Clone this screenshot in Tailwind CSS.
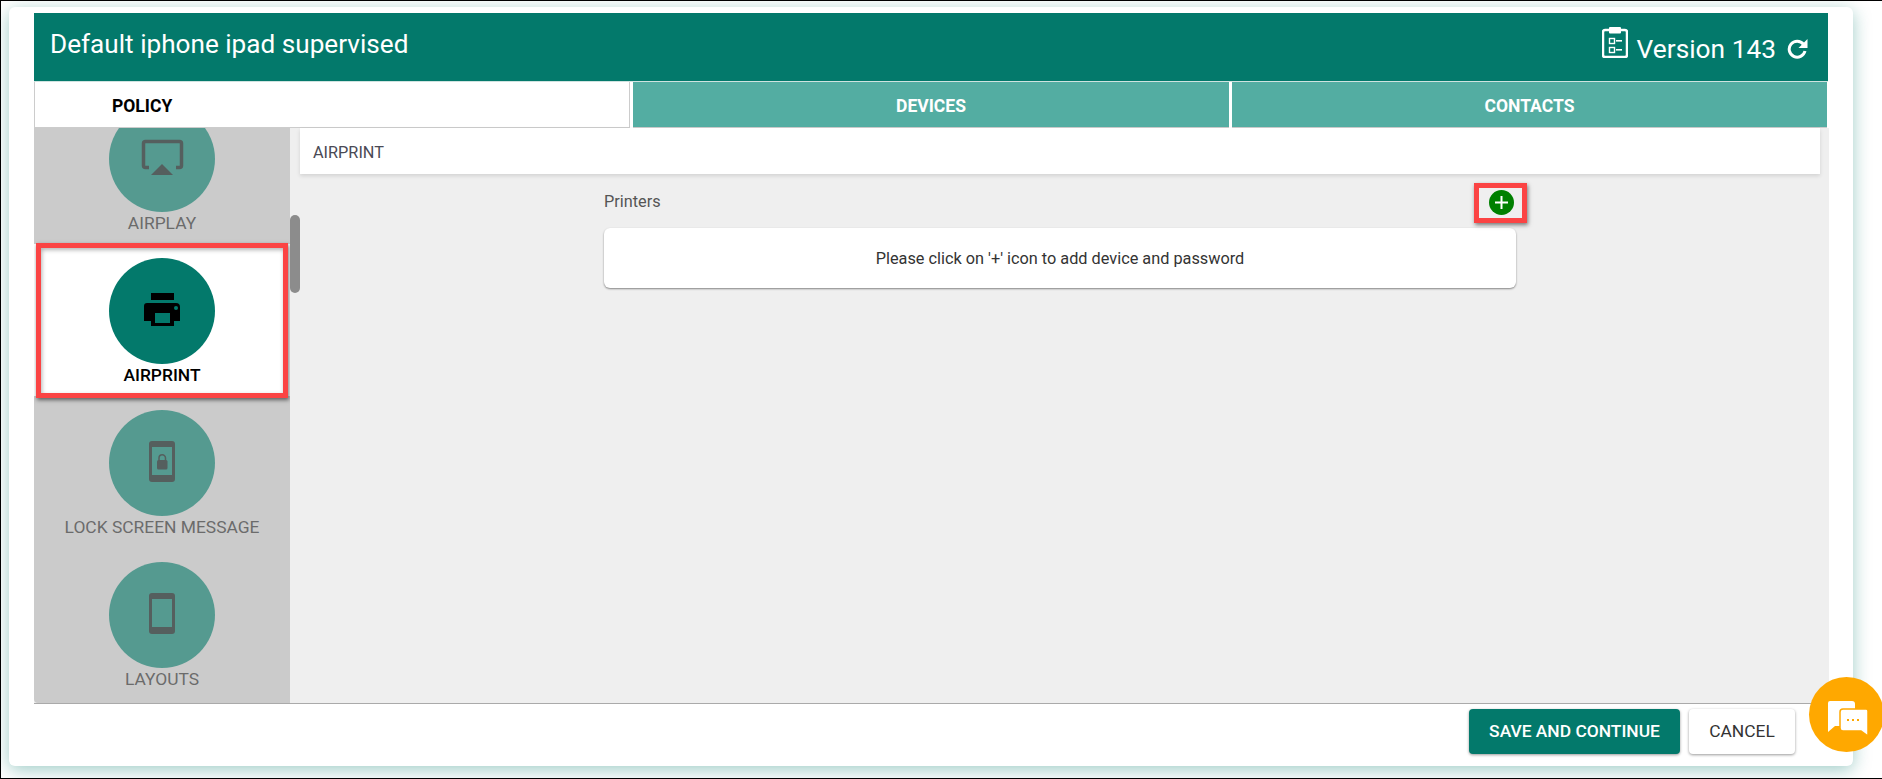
<!DOCTYPE html>
<html lang="en">
<head>
  <meta charset="UTF-8" />
  <title>Default iphone ipad supervised</title>
  <script src="https://cdn.jsdelivr.net/npm/@tailwindcss/browser@4"></script>
</head>
<body class="relative h-[779px] w-[1882px] overflow-hidden border-y border-l border-black bg-white font-[Roboto,sans-serif]">
  <!-- Card -->
  <div class="ml-[8px] mr-[29px] mt-[6px] flex h-[759px] flex-col rounded-md bg-white pl-[25px] pr-[25px] pt-[6px] shadow-[0_4px_18px_rgba(0,121,107,0.38)]">
    <!-- Header -->
    <header class="flex h-[68px] items-center justify-between bg-[#03796b] pl-[16px] pr-[20px] text-white">
      <h1 class="-mt-[6px] text-[26.150px] leading-none">Default iphone ipad supervised</h1>
      <div class="mt-[4px] flex items-center">
        <svg class="-mt-[12px] mr-[9px]" width="26" height="31" viewBox="0 0 26 31">
          <rect x="1" y="3" width="24" height="27" rx="2" fill="none" stroke="#fff" stroke-width="2.500"/>
          <rect x="7" y="0" width="12" height="6.500" rx="1" fill="#fff"/>
          <rect x="7.500" y="11.500" width="5" height="5" fill="none" stroke="#fff" stroke-width="1.400"/>
          <rect x="14" y="13" width="6" height="1.600" fill="#fff"/>
          <rect x="7.500" y="20.500" width="5" height="5" fill="none" stroke="#fff" stroke-width="1.400"/>
          <rect x="14" y="22" width="6" height="1.600" fill="#fff"/>
        </svg>
        <span class="text-[26.300px] leading-none">Version 143</span>
        <svg class="ml-[11px]" width="21" height="20" viewBox="0 0 21 20">
          <path d="M16.500 5.200A8 8 0 1 0 18 12" fill="none" stroke="#fff" stroke-width="3"/>
          <path d="M20.500 0v9h-9z" fill="#fff"/>
        </svg>
      </div>
    </header>

    <!-- Tabs -->
    <nav class="flex h-[47px] gap-[3px] border-t border-[#cfe3e0] pr-px text-[17.500px] font-bold">
      <div class="flex w-[596px] items-center border-x border-b border-[#cccccc] bg-white pl-[77px] pt-[3px] text-black">POLICY</div>
      <div class="flex w-[596px] items-center justify-center border-b border-[#cccccc] bg-[#53ada2] pt-[3px] text-white">DEVICES</div>
      <div class="flex flex-1 items-center justify-center border-b border-[#cccccc] bg-[#53ada2] pt-[3px] text-white">CONTACTS</div>
    </nav>

    <!-- Body -->
    <div class="-mr-px flex h-[576px] border-b border-[#aaaaaa] bg-[#efefef]">
      <!-- Sidebar list, scrolled part way down -->
      <aside class="w-[256px] shrink-0 overflow-hidden rounded-bl bg-[#cbcbcb] text-center text-[17.400px] leading-[22px] text-[#6b6b6b]">
        <div class="-mt-[36px]">
          <div class="h-[152px] pt-[14px]">
            <div class="mx-auto h-[106px] w-[106px] rounded-full bg-[#559a90]">
              <svg width="106" height="106" viewBox="0 0 106 106">
                <path d="M40 61.500h-3.500a2 2 0 0 1-2-2v-22a2 2 0 0 1 2-2h34a2 2 0 0 1 2 2v22a2 2 0 0 1-2 2H67" fill="none" stroke="#555f5e" stroke-width="3.500"/>
                <path d="M53 58l11 11H42z" fill="#555f5e"/>
              </svg>
            </div>
            <div>AIRPLAY</div>
          </div>
          <!-- Active item, red box is the screenshot's annotation -->
          <div class="relative z-10 h-[152px] bg-white pt-[14px] font-medium text-black">
            <div class="mx-auto h-[106px] w-[106px] rounded-full bg-[#03796b]">
              <svg width="106" height="106" viewBox="0 0 106 106">
                <rect x="42" y="35" width="23" height="7"/>
                <path d="M38 45h29a4 4 0 0 1 4 4v14h-6v5H42v-5h-7V48a3 3 0 0 1 3-3z"/>
                <rect x="46" y="55" width="15" height="10" fill="#03796b"/>
                <circle cx="67" cy="50" r="2" fill="#03796b"/>
              </svg>
            </div>
            <div>AIRPRINT</div>
            <div class="absolute -bottom-[2px] -top-[1px] left-[2px] right-[2px] border-[5px] border-[#fb4444] shadow-[1px_2px_4px_rgba(0,0,0,0.55),inset_1px_2px_4px_rgba(0,0,0,0.3)]"></div>
          </div>
          <div class="h-[152px] pt-[14px]">
            <div class="mx-auto h-[106px] w-[106px] rounded-full bg-[#559a90]">
              <svg width="106" height="106" viewBox="0 0 106 106">
                <path fill-rule="evenodd" d="M43 31h20a3 3 0 0 1 3 3v35a3 3 0 0 1-3 3H43a3 3 0 0 1-3-3V34a3 3 0 0 1 3-3zm0 6v28h20V37z" fill="#555f5e"/>
                <rect x="48" y="50" width="10.500" height="9.500" rx="1.500" fill="#555f5e"/>
                <path d="M50 51v-3a3.200 3.200 0 0 1 6.500 0v3" fill="none" stroke="#555f5e" stroke-width="1.500"/>
              </svg>
            </div>
            <div>LOCK SCREEN MESSAGE</div>
          </div>
          <div class="h-[152px] pt-[14px]">
            <div class="mx-auto h-[106px] w-[106px] rounded-full bg-[#559a90]">
              <svg width="106" height="106" viewBox="0 0 106 106">
                <path fill-rule="evenodd" d="M43 31h20a3 3 0 0 1 3 3v35a3 3 0 0 1-3 3H43a3 3 0 0 1-3-3V34a3 3 0 0 1 3-3zm0 6v28h20V37z" fill="#555f5e"/>
              </svg>
            </div>
            <div>LAYOUTS</div>
          </div>
        </div>
      </aside>

      <!-- Scrollbar -->
      <div class="w-[10px] shrink-0 pt-[87px]">
        <div class="h-[78px] rounded-full bg-[#8c8c8c]"></div>
      </div>

      <!-- Content -->
      <main class="flex-1">
        <div class="mr-[9px] flex h-[46px] items-center bg-white pl-[13px] pt-[4px] text-[16.300px] text-[#4a4a55] shadow-[0_2px_4px_rgba(0,0,0,0.12)]">AIRPRINT</div>
        <div class="ml-[304px] w-[912px]">
          <div class="relative flex h-[54px] items-center justify-between pr-[2px] text-[16.300px] text-[#555555]">
            <span class="pt-[3px]">Printers</span>
            <div class="mt-[2px] flex h-[25px] w-[25px] items-center justify-center rounded-full bg-[#008000]">
              <svg width="15" height="15" viewBox="0 0 15 15"><path d="M7.500 1v13M1 7.500h13" stroke="#fff" stroke-width="2"/></svg>
            </div>
            <div class="absolute right-[-11px] top-[9px] h-[40px] w-[53px] border-[5px] border-[#fb4444] shadow-[1px_2px_4px_rgba(0,0,0,0.5)]"></div>
          </div>
          <div class="flex h-[60px] items-center justify-center rounded-md bg-white pt-[2px] text-[16.300px] text-[#333333] shadow-[0_1px_2px_rgba(0,0,0,0.45)]">Please click on '+' icon to add device and password</div>
        </div>
      </main>
    </div>

    <!-- Footer -->
    <footer class="flex justify-end gap-[9px] pr-[33px] pt-[5px] text-[17.400px]">
      <button class="h-[45px] w-[211px] rounded bg-[#03796b] font-medium text-white shadow-[0_1px_3px_rgba(0,0,0,0.4)]">SAVE AND CONTINUE</button>
      <button class="h-[45px] w-[106px] rounded bg-white text-[#333333] shadow-[0_1px_3px_rgba(0,0,0,0.4)]">CANCEL</button>
    </footer>
  </div>

  <!-- Chat bubble -->
  <div class="absolute left-[1808px] top-[676px] h-[75px] w-[75px] rounded-full bg-[#ffa800]">
    <svg width="75" height="75" viewBox="0 0 75 75">
      <path d="M21 24h22a3 3 0 0 1 3 3v19a3 3 0 0 1-3 3H26l-7 6V26a2 2 0 0 1 2-2z" fill="#fff"/>
      <path d="M34 32h23a2 2 0 0 1 2 2v25l-7-5H34a3 3 0 0 1-3-3V35a3 3 0 0 1 3-3z" fill="#fff" stroke="#ffa800" stroke-width="1.500"/>
      <rect x="38" y="42" width="2" height="2" fill="#ffa800"/>
      <rect x="43" y="42" width="2" height="2" fill="#ffa800"/>
      <rect x="48" y="42" width="2" height="2" fill="#ffa800"/>
    </svg>
  </div>
</body>
</html>
